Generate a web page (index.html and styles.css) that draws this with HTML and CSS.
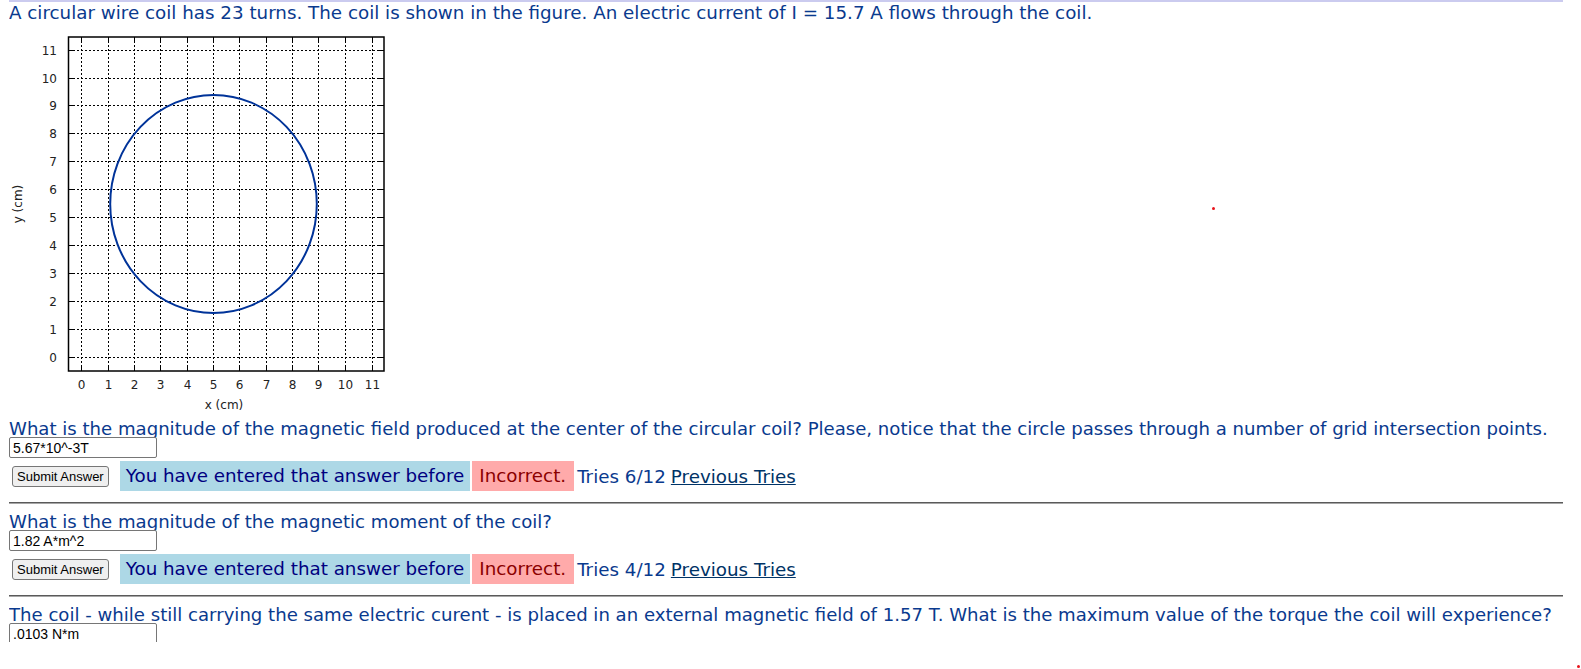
FILE: index.html
```html
<!DOCTYPE html>
<html>
<head>
<meta charset="utf-8">
<title>Coil problem</title>
<link rel="stylesheet" href="styles.css">
</head>
<body>
<div class="page">
  <div class="topline"></div>
  <div class="title">A circular wire coil has 23 turns. The coil is shown in the figure. An electric current of I = 15.7 A flows through the coil.</div>
  <svg class="plot" width="380" height="399" viewBox="9 21 380 399" xmlns="http://www.w3.org/2000/svg">
    <g class="grid">
      <line x1="81.5" y1="37" x2="81.5" y2="371"/>
      <line x1="108.5" y1="37" x2="108.5" y2="371"/>
      <line x1="134.5" y1="37" x2="134.5" y2="371"/>
      <line x1="160.5" y1="37" x2="160.5" y2="371"/>
      <line x1="187.5" y1="37" x2="187.5" y2="371"/>
      <line x1="213.5" y1="37" x2="213.5" y2="371"/>
      <line x1="239.5" y1="37" x2="239.5" y2="371"/>
      <line x1="266.5" y1="37" x2="266.5" y2="371"/>
      <line x1="292.5" y1="37" x2="292.5" y2="371"/>
      <line x1="318.5" y1="37" x2="318.5" y2="371"/>
      <line x1="345.5" y1="37" x2="345.5" y2="371"/>
      <line x1="372.5" y1="37" x2="372.5" y2="371"/>
      <line x1="69" y1="357.5" x2="384" y2="357.5"/>
      <line x1="69" y1="329.5" x2="384" y2="329.5"/>
      <line x1="69" y1="301.5" x2="384" y2="301.5"/>
      <line x1="69" y1="273.5" x2="384" y2="273.5"/>
      <line x1="69" y1="245.5" x2="384" y2="245.5"/>
      <line x1="69" y1="217.5" x2="384" y2="217.5"/>
      <line x1="69" y1="189.5" x2="384" y2="189.5"/>
      <line x1="69" y1="161.5" x2="384" y2="161.5"/>
      <line x1="69" y1="133.5" x2="384" y2="133.5"/>
      <line x1="69" y1="105.5" x2="384" y2="105.5"/>
      <line x1="69" y1="78.5" x2="384" y2="78.5"/>
      <line x1="69" y1="50.5" x2="384" y2="50.5"/>
    </g>
    <g class="ticks">
      <path d="M81.5 37v5M108.5 37v5M134.5 37v5M160.5 37v5M187.5 37v5M213.5 37v5M239.5 37v5M266.5 37v5M292.5 37v5M318.5 37v5M345.5 37v5M372.5 37v5"/>
      <path d="M81.5 371v-5M108.5 371v-5M134.5 371v-5M160.5 371v-5M187.5 371v-5M213.5 371v-5M239.5 371v-5M266.5 371v-5M292.5 371v-5M318.5 371v-5M345.5 371v-5M372.5 371v-5"/>
      <path d="M68.5 357.5h5M68.5 329.5h5M68.5 301.5h5M68.5 273.5h5M68.5 245.5h5M68.5 217.5h5M68.5 189.5h5M68.5 161.5h5M68.5 133.5h5M68.5 105.5h5M68.5 78.5h5M68.5 50.5h5"/>
      <path d="M384 357.5h-5M384 329.5h-5M384 301.5h-5M384 273.5h-5M384 245.5h-5M384 217.5h-5M384 189.5h-5M384 161.5h-5M384 133.5h-5M384 105.5h-5M384 78.5h-5M384 50.5h-5"/>
    </g>
    <rect class="frame" x="68.5" y="37" width="315.5" height="334"/>
    <ellipse class="coil" cx="213.5" cy="204" rx="103.3" ry="109"/>
    <g class="ylabels">
      <text x="57" y="361.5">0</text>
      <text x="57" y="333.5">1</text>
      <text x="57" y="305.5">2</text>
      <text x="57" y="277.5">3</text>
      <text x="57" y="249.5">4</text>
      <text x="57" y="221.5">5</text>
      <text x="57" y="193.5">6</text>
      <text x="57" y="165.5">7</text>
      <text x="57" y="137.5">8</text>
      <text x="57" y="109.5">9</text>
      <text x="57" y="82.5">10</text>
      <text x="57" y="54.5">11</text>
    </g>
    <g class="xlabels">
      <text x="81.5" y="389">0</text>
      <text x="108.5" y="389">1</text>
      <text x="134.5" y="389">2</text>
      <text x="160.5" y="389">3</text>
      <text x="187.5" y="389">4</text>
      <text x="213.5" y="389">5</text>
      <text x="239.5" y="389">6</text>
      <text x="266.5" y="389">7</text>
      <text x="292.5" y="389">8</text>
      <text x="318.5" y="389">9</text>
      <text x="345.5" y="389">10</text>
      <text x="372.5" y="389">11</text>
    </g>
    <text class="axis" x="224" y="409">x (cm)</text>
    <text class="axis" x="22" y="204" transform="rotate(-90 22 204)">y (cm)</text>
  </svg>

  <div class="q">
    <div class="qtext">What is the magnitude of the magnetic field produced at the center of the circular coil? Please, notice that the circle passes through a number of grid intersection points.</div>
    <input class="ans" type="text" value="5.67*10^-3T">
    <div class="row">
      <button class="submit" type="button">Submit Answer</button>
      <span class="fb-blue">You have entered that answer before</span>
      <span class="fb-pink">Incorrect.</span>
      <span class="tries">Tries 6/12</span>
      <a class="prev" href="#">Previous Tries</a>
    </div>
  </div>
  <hr class="sep">
  <div class="q">
    <div class="qtext">What is the magnitude of the magnetic moment of the coil?</div>
    <input class="ans" type="text" value="1.82 A*m^2">
    <div class="row">
      <button class="submit" type="button">Submit Answer</button>
      <span class="fb-blue">You have entered that answer before</span>
      <span class="fb-pink">Incorrect.</span>
      <span class="tries">Tries 4/12</span>
      <a class="prev" href="#">Previous Tries</a>
    </div>
  </div>
  <hr class="sep">
  <div class="q">
    <div class="qtext">The coil - while still carrying the same electric curent - is placed in an external magnetic field of 1.57 T. What is the maximum value of the torque the coil will experience?</div>
    <input class="ans" type="text" value=".0103 N*m">
  </div>
</div>
<div class="dot dot1"></div>
<div class="dot dot2"></div>
</body>
</html>
```
FILE: styles.css
```css
html, body {
  margin: 0;
  padding: 0;
  background: #ffffff;
}
body {
  font-family: "DejaVu Sans", Verdana, sans-serif;
  color: #0a3a8e;
  position: relative;
  width: 1581px;
  height: 669px;
  overflow: hidden;
}
.page {
  margin-left: 9px;
  width: 1554px;
  height: 642px;
  overflow: hidden;
}
.topline {
  height: 2px;
  background: #cbcbef;
}
.title {
  margin-top: 2px;
  font-size: 18.3px;
  line-height: 17px;
  white-space: nowrap;
}
.plot {
  display: block;
  margin-left: 0;
}
.grid line {
  stroke: #000;
  stroke-width: 1;
  stroke-dasharray: 2 2;
  shape-rendering: crispEdges;
}
.ticks path {
  stroke: #000;
  stroke-width: 1;
  fill: none;
  shape-rendering: crispEdges;
}
.frame {
  fill: none;
  stroke: #000;
  stroke-width: 1.5;
}
.coil {
  fill: none;
  stroke: #003399;
  stroke-width: 2;
}
.plot text {
  font-family: "DejaVu Sans", sans-serif;
  font-size: 12px;
  fill: #222;
}
.ylabels text { text-anchor: end; }
.xlabels text { text-anchor: middle; }
.plot .axis { text-anchor: middle; }
.qtext {
  font-size: 18.1px;
  line-height: 18px;
  margin-bottom: -1px;
  white-space: nowrap;
}
.ans {
  display: block;
  position: relative;
  box-sizing: border-box;
  width: 148px;
  height: 21px;
  margin: 0;
  padding: 0 3px;
  border: 1px solid #767676;
  border-radius: 2px;
  font-family: "Liberation Sans", Arial, sans-serif;
  font-size: 14px;
  color: #000;
  background: #fff;
}
.row {
  display: flex;
  align-items: center;
  height: 30px;
  margin-top: 3px;
  font-size: 18.3px;
  white-space: nowrap;
}
.submit {
  box-sizing: border-box;
  height: 21px;
  margin: 0 11px 0 3px;
  padding: 0 4px;
  border: 1px solid #767676;
  border-radius: 3px;
  background: #efefef;
  font-family: "Liberation Sans", Arial, sans-serif;
  font-size: 13px;
  color: #000;
}
.fb-blue, .fb-pink {
  box-sizing: border-box;
  height: 30px;
  line-height: 30px;
}
.fb-blue {
  padding: 0 6px;
  background: #add8e6;
  color: #000080;
}
.fb-pink {
  margin-left: 2px;
  padding: 0 8px 0 7px;
  background: #ffaaaa;
  color: #8b0000;
}
.tries {
  margin-left: 3px;
}
.prev {
  margin-left: 5px;
  color: #003366;
  text-decoration: underline;
}
.sep {
  height: 0;
  margin: 11px 0 9px 0;
  border: 0;
  border-top: 1px solid #5a5a5a;
  border-bottom: 1px solid #a6a6a6;
}
.dot {
  position: absolute;
  width: 3px;
  height: 3px;
  border-radius: 50%;
  background: #e8141b;
}
.dot1 { left: 1212px; top: 207px; }
.dot2 { left: 1577px; top: 665px; }
```
